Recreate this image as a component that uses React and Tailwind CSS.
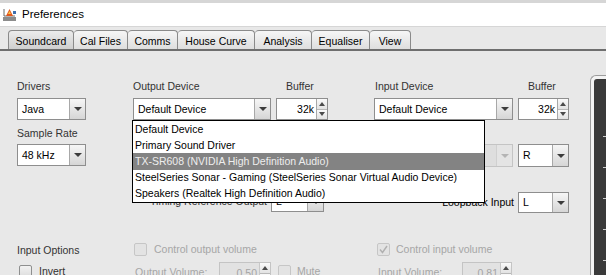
import React from 'react'

const TABS = [
  { label: 'Soundcard', w: 'w-[66px]', active: true },
  { label: 'Cal Files', w: 'w-[54px]' },
  { label: 'Comms', w: 'w-[50px]' },
  { label: 'House Curve', w: 'w-[77px]' },
  { label: 'Analysis', w: 'w-[57px]' },
  { label: 'Equaliser', w: 'w-[58px]' },
  { label: 'View', w: 'w-[41px]' },
]

const DEVICES = [
  'Default Device',
  'Primary Sound Driver',
  'TX-SR608 (NVIDIA High Definition Audio)',
  'SteelSeries Sonar - Gaming (SteelSeries Sonar Virtual Audio Device)',
  'Speakers (Realtek High Definition Audio)',
]

function Arrow({ disabled }) {
  return (
    <div className={`flex w-[16px] shrink-0 items-center justify-center border-l ${disabled ? 'border-[#d0d0d0] bg-[#e4e4e4]' : 'border-[#a8a8a8] bg-gradient-to-b from-[#f6f6f6] to-[#d6d6d6]'}`}>
      <div className={`h-0 w-0 border-x-[4px] border-t-[4px] border-x-transparent ${disabled ? 'border-t-[#b4b4b4]' : 'border-t-[#3c3c3c]'}`} />
    </div>
  )
}

function Select({ w, value, disabled, h = 'h-[22px]' }) {
  return (
    <div className={`flex ${w} ${h} shrink-0 border ${disabled ? 'border-[#c4c4c4] bg-[#dedede]' : 'border-[#8e8e8e] bg-white'}`}>
      <div className="flex flex-1 items-center pl-[4px] text-black">{value}</div>
      <Arrow disabled={disabled} />
    </div>
  )
}

function Spinner({ w, value, disabled }) {
  return (
    <div className={`flex ${w} h-[22px] shrink-0 border ${disabled ? 'border-[#c4c4c4] bg-[#e2e2e2] text-[#a4a4a4]' : 'border-[#8e8e8e] bg-white text-black'}`}>
      <div className="flex flex-1 items-center justify-end pr-[2px]">{value}</div>
      <div className={`flex w-[11px] flex-col border-l ${disabled ? 'border-[#c8c8c8]' : 'border-[#a8a8a8]'}`}>
        <div className="flex flex-1 items-center justify-center border-b border-[#b8b8b8] bg-gradient-to-b from-[#fafafa] to-[#e2e2e2]">
          <div className="h-0 w-0 border-x-[3px] border-b-[4px] border-x-transparent border-b-[#4a4a4a]" />
        </div>
        <div className="flex flex-1 items-center justify-center bg-gradient-to-b from-[#fafafa] to-[#e2e2e2]">
          <div className="h-0 w-0 border-x-[3px] border-t-[4px] border-x-transparent border-t-[#4a4a4a]" />
        </div>
      </div>
    </div>
  )
}

function Check({ disabled, checked }) {
  return (
    <div className={`flex h-[13px] w-[13px] shrink-0 items-center justify-center rounded-[2px] border ${disabled ? 'border-[#c6c6c6] bg-[#e3e3e3]' : 'border-[#8e8f8f] bg-gradient-to-b from-[#f2f2f2] to-[#dcdcdc]'}`}>
      {checked && (
        <svg width="9" height="9" viewBox="0 0 9 9">
          <path d="M1 4.5 L3.5 7.5 L8 1" fill="none" stroke="#b0b0b0" strokeWidth="1.4" />
        </svg>
      )}
    </div>
  )
}

function AppIcon() {
  return (
    <svg width="15" height="15" viewBox="0 0 15 15">
      <rect x="1" y="10" width="13" height="4" fill="#8c8c8c" />
      <path d="M2 9 L2 2 M2 9 L13 9" stroke="#6a6a6a" strokeWidth="1" />
      <path d="M4 9 L7.5 2 L11 9 Z" fill="#e2571c" />
      <path d="M6 7 L7.5 4 L9 7 Z" fill="#f6c243" />
      <rect x="11" y="4" width="3" height="3" fill="#3d6fb0" />
    </svg>
  )
}

export default function App() {
  return (
    <div className="relative h-[275px] w-[606px] overflow-hidden bg-[#e8e8e8] font-['Liberation_Sans',Arial,sans-serif] text-[10.5px] leading-[13px] text-[#333]">
      {/* title bar */}
      <div className="flex h-[27px] items-center gap-[5px] border-t-[3px] border-b border-[#d6d6d6] bg-white pl-[2px] text-black">
        <AppIcon />
        <span className="text-[11.5px]">Preferences</span>
      </div>

      {/* tabs */}
      <div className="flex h-[24px] items-end border-b-2 border-[#6e6e6e] pl-[8px]">
        {TABS.map((t, i) => (
          <div
            key={t.label}
            className={`flex h-[19px] ${t.w} items-center justify-center rounded-t-[4px] border-t border-r border-[#8a8a8a] pt-[3px] text-black
              ${i === 0 ? 'border-l' : ''}
              ${t.active ? 'bg-gradient-to-b from-[#ececec] to-[#cfcfcf]' : 'bg-gradient-to-b from-[#f6f6f6] to-[#dedede]'}`}
          >
            {t.label}
          </div>
        ))}
      </div>

      <div className="flex">
        {/* form */}
        <div className="flex pl-[17px] pt-[29px]">
          {/* drivers column */}
          <div className="flex w-[69px] flex-col">
            <div className="h-[13px]">Drivers</div>
            <div className="mt-[5px]"><Select w="w-[69px]" value="Java" /></div>
            <div className="mt-[7px] h-[13px]">Sample Rate</div>
            <div className="mt-[4px]"><Select w="w-[69px]" value="48 kHz" /></div>
            <div className="mt-[78px] h-[13px]">Input Options</div>
            <div className="mt-[8px] flex items-center gap-[7px] pl-[2px]">
              <Check />
              <span>Invert</span>
            </div>
          </div>

          {/* output column */}
          <div className="ml-[47px] flex w-[195px] flex-col">
            <div className="flex h-[13px]">
              <span className="w-[138px]">Output Device</span>
              <span className="ml-[15px]">Buffer</span>
            </div>
            <div className="mt-[5px] flex">
              <Select w="w-[138px]" value="Default Device" />
              <div className="ml-[5px]"><Spinner w="w-[52px]" value="32k" /></div>
            </div>
            <div className="mt-[71px] flex h-[21px] items-center">
              <span className="w-[138px] pr-[4px] text-right">Timing Reference Output</span>
              <Select w="w-[53px]" h="h-[21px]" value="L" />
            </div>
            <div className="mt-[31px] flex items-center gap-[7px] pl-[1px] text-[#a6a6a6]">
              <Check disabled />
              <span>Control output volume</span>
            </div>
            <div className="mt-[6px] flex items-start text-[#a6a6a6]">
              <span className="mt-[4px] w-[86px] pl-[2px]">Output Volume:</span>
              <Spinner w="w-[52px]" value="0.50" disabled />
              <div className="ml-[7px] mt-[3px] flex items-center gap-[6px]">
                <Check disabled />
                <span>Mute</span>
              </div>
            </div>
          </div>

          {/* input column */}
          <div className="ml-[46px] flex w-[195px] flex-col">
            <div className="flex h-[13px]">
              <span className="w-[139px] pl-[1px]">Input Device</span>
              <span className="ml-[15px]">Buffer</span>
            </div>
            <div className="mt-[5px] flex">
              <Select w="w-[139px]" value="Default Device" />
              <div className="ml-[5px]"><Spinner w="w-[51px]" value="32k" /></div>
            </div>
            <div className="mt-[24px] flex">
              <Select w="w-[139px]" h="h-[23px]" value="" disabled />
              <div className="ml-[5px]"><Select w="w-[51px]" h="h-[23px]" value="R" /></div>
            </div>
            <div className="mt-[25px] flex h-[21px] items-center">
              <span className="w-[144px] pr-[4px] text-right text-black">Loopback Input</span>
              <Select w="w-[51px]" h="h-[21px]" value="L" />
            </div>
            <div className="mt-[30px] flex items-center gap-[6px] pl-[3px] text-[#a6a6a6]">
              <Check disabled checked />
              <span>Control input volume</span>
            </div>
            <div className="mt-[6px] flex items-start text-[#a6a6a6]">
              <span className="mt-[4px] w-[88px] pl-[4px]">Input Volume:</span>
              <Spinner w="w-[50px]" value="0.81" disabled />
            </div>
          </div>
        </div>

        {/* right graph panel */}
        <div className="ml-[21px] mt-[24px] h-[230px] flex-1 rounded-tl-[6px] border-t border-l border-[#9c9c9c] bg-[#f3f3f3] pl-[3px] pt-[3px]">
          <div className="flex h-full flex-col gap-[30px] rounded-tl-[3px] bg-[#3a3a3a] pt-[57px]">
            {[0, 1, 2, 3, 4].map(i => (
              <div key={i} className="ml-[9px] h-px w-[3px] bg-[#cfcfcf]" />
            ))}
          </div>
        </div>
      </div>

      {/* open combo popup */}
      <div className="absolute left-[132px] top-[120px] w-[353px] border border-black bg-white text-black">
        {DEVICES.map((d, i) => (
          <div
            key={d}
            className={`flex h-[16.2px] items-center whitespace-nowrap pl-[2px] ${i === 2 ? 'bg-[#838383] text-[#eeeeee]' : ''}`}
          >
            {d}
          </div>
        ))}
      </div>
    </div>
  )
}
